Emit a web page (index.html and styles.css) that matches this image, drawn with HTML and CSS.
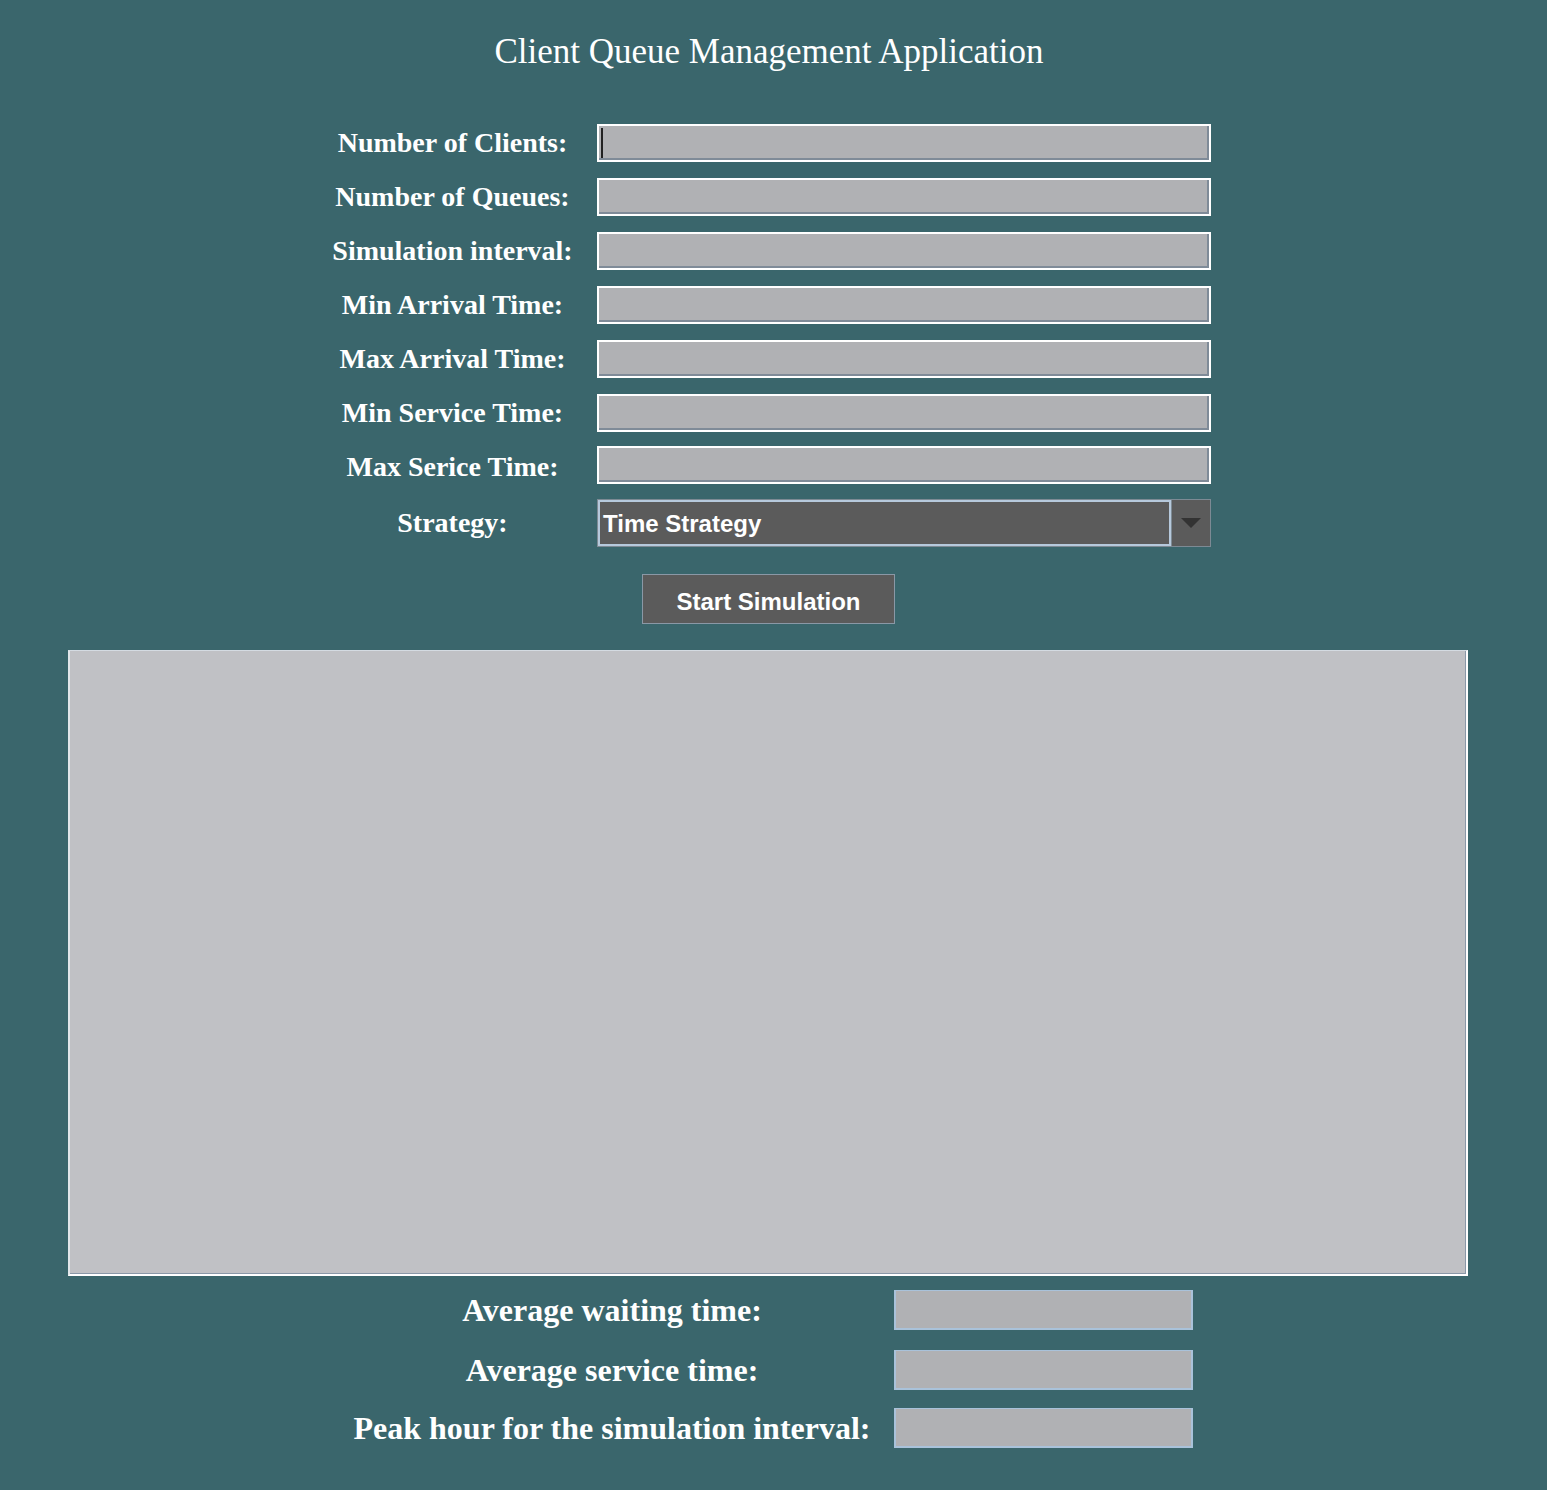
FILE: index.html
```html
<!DOCTYPE html>
<html lang="en">
<head>
  <meta charset="UTF-8">
  <title>Client Queue Management Application</title>
  <link rel="stylesheet" href="styles.css">
</head>
<body>
  <div class="app">
    <h1 class="title">Client Queue Management Application</h1>

    <div class="setup">
      <label class="setup-label">Number of Clients:</label>
      <div class="field focused"><span class="caret"></span></div>

      <label class="setup-label">Number of Queues:</label>
      <div class="field"></div>

      <label class="setup-label">Simulation interval:</label>
      <div class="field"></div>

      <label class="setup-label">Min Arrival Time:</label>
      <div class="field"></div>

      <label class="setup-label">Max Arrival Time:</label>
      <div class="field"></div>

      <label class="setup-label">Min Service Time:</label>
      <div class="field"></div>

      <label class="setup-label">Max Serice Time:</label>
      <div class="field"></div>

      <label class="setup-label strategy-label">Strategy:</label>
      <div class="combo">
        <div class="combo-value">Time Strategy</div>
        <div class="combo-arrow">
          <svg width="20" height="10" viewBox="0 0 20 10"><path d="M0 0 H20 L10 10 Z" fill="#333333"/></svg>
        </div>
      </div>
    </div>

    <div class="actions">
      <button class="start-button">Start Simulation</button>
    </div>

    <div class="log"></div>

    <div class="results">
      <div class="result-label">Average waiting time:</div>
      <div class="result-field"></div>

      <div class="result-label">Average service time:</div>
      <div class="result-field"></div>

      <div class="result-label">Peak hour for the simulation interval:</div>
      <div class="result-field"></div>
    </div>
  </div>
</body>
</html>
```

FILE: styles.css
```css
body {
  margin: 0;
  background-color: #3a666c;
  color: white;
  font-family: "Liberation Serif", "Times New Roman", serif;
}
.app {
  width: 1547px;
  min-height: 1490px;
  padding-top: 30px;
  box-sizing: border-box;
}
.title {
  margin: 0;
  text-align: center;
  font-size: 35px;
  font-weight: normal;
  line-height: 44px;
  padding-right: 9px;
}
.setup {
  display: grid;
  grid-template-columns: 265px 614px;
  column-gap: 12px;
  row-gap: 16px;
  margin: 50px 0 0 320px;
  width: 891px;
}
.setup-label {
  display: flex;
  align-items: center;
  justify-content: center;
  font-size: 28px;
  font-weight: bold;
  height: 38px;
  white-space: nowrap;
}
.strategy-label {
  height: 47px;
  margin-top: -3px;
}
.field {
  height: 38px;
  box-sizing: border-box;
  background-color: #b0b1b4;
  border: 2px solid #ffffff;
  box-shadow: inset -2px -2px 0 #7f8b98;
  position: relative;
}
.field:nth-of-type(7) {
  margin-top: -2px;
}
.caret {
  position: absolute;
  left: 2px;
  top: 2px;
  width: 2px;
  height: 30px;
  background-color: #222222;
}
.combo {
  display: flex;
  height: 48px;
  margin-top: -3px;
  box-sizing: border-box;
  border: 1px solid #7d8a94;
  background-color: #5b5b5b;
}
.combo-value {
  flex: 1;
  display: flex;
  align-items: center;
  padding: 2px 0 0 3px;
  border: 2px solid #b6c9dc;
  font-family: "Liberation Sans", Arial, sans-serif;
  font-weight: bold;
  font-size: 24px;
}
.combo-arrow {
  width: 38px;
  display: flex;
  align-items: center;
  justify-content: center;
  border-left: 1px solid #7d8a94;
}
.actions {
  display: flex;
  justify-content: center;
  margin-top: 27px;
  padding-right: 10px;
}
.start-button {
  width: 253px;
  height: 50px;
  background-color: #5b5b5b;
  border: 1px solid #8a98a6;
  color: white;
  font-family: "Liberation Sans", Arial, sans-serif;
  font-weight: bold;
  font-size: 24px;
  padding: 5px 0 0 0;
}
.log {
  margin: 26px 0 0 68px;
  width: 1400px;
  height: 626px;
  box-sizing: border-box;
  background-color: #c0c1c5;
  border-top: 1px solid #d4dbe2;
  border-left: 2px solid #e2e6ea;
  border-right: 2px solid #ffffff;
  border-bottom: 2px solid #ffffff;
  box-shadow: inset -1px -1px 0 #8a98a8;
}
.results {
  display: grid;
  grid-template-columns: 520px 299px;
  column-gap: 22px;
  row-gap: 20px;
  margin: 14px 0 0 352px;
  width: 841px;
}
.result-label {
  display: flex;
  align-items: center;
  justify-content: center;
  height: 40px;
  font-size: 32px;
  font-weight: bold;
  white-space: nowrap;
}
.result-label:nth-of-type(5),
.result-field:nth-of-type(6) {
  margin-top: -2px;
}
.result-field {
  height: 40px;
  box-sizing: border-box;
  background-color: #b0b1b4;
  border: 2px solid #a9c2da;
  border-top-width: 1px;
}
```
